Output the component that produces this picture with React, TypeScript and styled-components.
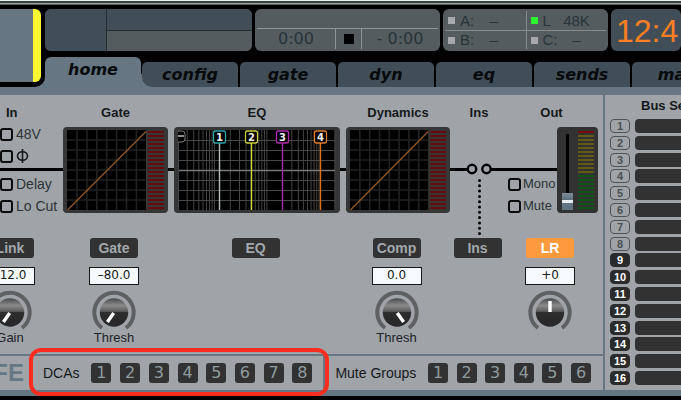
import React from "react";
import styled, { createGlobalStyle, css } from "styled-components";

const color = {
  slate: "#667783",
  slateDark: "#414e57",
  grey: "#555c5f",
  surface: "#a0a4a9",
  ink: "#27343a",
  dark: "#323232",
  orange: "#fd9a3d",
};

const GlobalStyle = createGlobalStyle`
  * { box-sizing: border-box; }
  html, body { margin: 0; background: #000; }
  body, button, input { font-family: "Liberation Sans", Arial, sans-serif; }
  button { padding: 0; border: 0; cursor: pointer; }
`;

const Page = styled.div`
  min-height: 100vh;
  overflow: hidden;
  background: #000;
  color: #15191b;
`;

const WindowEdge = styled.div`
  height: 5px;
  background: linear-gradient(#e8f3ec 0 1px, #35413e 1px 3px, #98a3a1 3px 4px, #59625f 4px 5px);
`;

/* ---------- header ---------- */

const Header = styled.header`
  display: flex;
  padding-bottom: 8px;
  background: ${color.slate};
`;

const ChannelSlot = styled.div`
  flex: none;
  width: 45px;
  padding: 4px 4px 5px 0;
  background: #000;
  border-bottom-right-radius: 10px;
`;

const ChannelStrip = styled.div`
  height: 73px;
  background: ${color.slate};
  border-right: 8px solid #fdf632;
  border-radius: 0 6px 6px 0;
`;

const HeaderMain = styled.div`
  flex: 1;
  min-width: 0;
  overflow: hidden;
`;

const Displays = styled.div`
  display: flex;
  gap: 3px;
  padding: 4px 0 6px;
  background: #000;
`;

const Display = styled.div<{ $width?: number; $bg?: string }>`
  flex: ${(p) => (p.$width ? `0 0 ${p.$width}px` : "1 0 auto")};
  height: 42px;
  border-radius: 6px;
  overflow: hidden;
  background: ${(p) => p.$bg ?? color.grey};
  color: ${color.ink};
`;

const NameGrid = styled(Display)`
  display: grid;
  grid-template-columns: 62px 1fr;
  grid-template-rows: 1fr 1fr;
`;

const NameCell = styled.div<{ $tall?: boolean; $grey?: boolean }>`
  grid-row: ${(p) => (p.$tall ? "span 2" : "auto")};
  background: ${(p) => (p.$grey ? color.grey : color.slateDark)};
  border-right: ${(p) => (p.$tall ? "1px solid #222b30" : "0")};
  border-top: ${(p) => (p.$grey ? "1px solid #222b30" : "0")};
`;

const Recorder = styled(Display)`
  display: flex;
  flex-direction: column;
  padding: 0 2px 2px;
`;

const RecorderTitle = styled.div`
  height: 22px;
  border-bottom: 1px solid #8f9596;
`;

const RecorderRow = styled.div`
  flex: 1;
  display: grid;
  grid-template-columns: 78px 27px 1fr;
  font: 16px/20px "DejaVu Sans", sans-serif;
  text-align: center;
`;

const StopCell = styled.div`
  display: flex;
  align-items: center;
  justify-content: center;
  border: solid #8f9596;
  border-width: 0 1px;
`;

const StopMark = styled.span`
  width: 10px;
  height: 10px;
  background: #000;
`;

const CardGrid = styled(Display)`
  display: grid;
  grid-template-columns: 1fr 1fr;
  grid-template-rows: 1fr 1fr;
  padding: 2px;
`;

const CardCell = styled.div<{ $right?: boolean; $bottom?: boolean }>`
  display: grid;
  grid-template-columns: 12px 20px 28px;
  align-items: center;
  padding-left: ${(p) => (p.$right ? 4 : 3)}px;
  border: solid #858b8c;
  border-width: ${(p) => (p.$bottom ? 1 : 0)}px 0 0 ${(p) => (p.$right ? 1 : 0)}px;
  font-size: 15px;
  line-height: 18px;
`;

const CardRate = styled.span`
  text-align: center;
`;

const Lamp = styled.span<{ $on?: boolean }>`
  width: 7px;
  height: 7px;
  background: ${(p) => (p.$on ? "#2bf52f" : "#a6a8ae")};
`;

const Clock = styled(Display)`
  padding-left: 5px;
  color: #fd7f24;
  font-size: 32px;
  line-height: 44px;
`;

const Tabs = styled.nav`
  display: flex;
  align-items: flex-end;
  gap: 2px;
  background: #000;
`;

const tabBase = css`
  flex: none;
  width: 96px;
  color: #070a0c;
  font: italic bold 16px/24px "DejaVu Sans", sans-serif;
`;

const Tab = styled.button`
  ${tabBase}
  height: 25px;
  border-radius: 5px 5px 0 0;
  background: ${color.slateDark};
`;

const ActiveTab = styled.button`
  ${tabBase}
  height: 30px;
  padding-bottom: 4px;
  border-radius: 6px 6px 0 0;
  background: ${color.slate};
`;

const NextTabSlot = styled.span`
  display: flex;
  margin-left: -2px;
  padding-left: 1px;
  background: linear-gradient(#000 12px, ${color.slate} 12px);
`;

const NextTab = styled(Tab)`
  border-bottom-left-radius: 10px;
`;

/* ---------- body ---------- */

const Body = styled.main`
  display: flex;
  background: ${color.surface};
  border-bottom: 6px solid ${color.slate};
`;

const HomePane = styled.div`
  flex: 1;
  min-width: 0;
  border-right: 2px solid ${color.slate};
`;

const Sections = styled.div`
  display: grid;
  grid-template-columns: 60fr 111fr 172fr 110fr 52fr 98fr;
  height: 259px;
  overflow: hidden;
`;

const Section = styled.section`
  display: flex;
  flex-direction: column;
  min-width: 0;
`;

const OutSection = styled(Section)`
  padding-right: 5px;
`;

const Heading = styled.h2<{ $start?: boolean }>`
  margin: 0;
  padding: ${(p) => (p.$start ? "10px 0 6px 6px" : "10px 0 6px")};
  font-size: 13px;
  line-height: 16px;
  text-align: ${(p) => (p.$start ? "left" : "center")};
`;

const wire = css`
  background: linear-gradient(transparent 41px, #000 41px 44px, transparent 44px);
`;

const Stage = styled.div`
  height: 86px;
  padding: 0 3px;
  ${wire}
`;

const InputStage = styled.div`
  display: flex;
  flex-direction: column;
  justify-content: space-between;
  height: 86px;
  ${wire}
`;

const OutputStage = styled.div`
  display: flex;
  justify-content: space-between;
  align-items: flex-end;
  height: 86px;
  padding-left: 3px;
  ${wire}
`;

const Checks = styled.div`
  display: flex;
  flex-direction: column;
  gap: 8px;
`;

const Check = styled.label<{ $compact?: boolean }>`
  display: flex;
  align-items: center;
  gap: ${(p) => (p.$compact ? 2 : 3)}px;
  height: 14px;
  color: #2c3336;
  font-size: ${(p) => (p.$compact ? 13 : 14)}px;
  line-height: 14px;
  white-space: nowrap;

  input {
    appearance: none;
    flex: none;
    width: 13px;
    height: 13px;
    margin: 0;
    border: 2px solid #0c0c0c;
    border-radius: 3px;
  }
  input:checked {
    background: ${color.orange};
  }
`;

const GraphSvg = styled.svg`
  display: block;
  width: 100%;
  height: 86px;
  overflow: visible;
`;

const Controls = styled.div<{ $start?: boolean }>`
  display: flex;
  flex-direction: column;
  align-items: center;
  width: ${(p) => (p.$start ? "50px" : "auto")};
  margin: ${(p) => (p.$start ? "25px 0 0 -15px" : "25px 3px 0 0")};
`;

const Toggle = styled.button<{ $on?: boolean }>`
  width: 48px;
  height: 20px;
  border-radius: 3px;
  background: ${(p) => (p.$on ? color.orange : color.dark)};
  color: ${(p) => (p.$on ? "#fff" : "#a3a8ac")};
  font-size: 14px;
  font-weight: bold;
  line-height: 20px;
`;

const Value = styled.input`
  width: 50px;
  height: 18px;
  margin: 9px 0 5px;
  padding: 0 0 2px;
  border: 1px solid #15191b;
  border-radius: 0;
  background: #f7fafc;
  color: #15191b;
  font-family: "DejaVu Sans", sans-serif;
  font-size: 12px;
  text-align: center;
`;

const KnobLabel = styled.label`
  position: relative;
  display: flex;
  flex-direction: column;
  align-items: center;
  color: #1d2326;
  font-size: 13px;
  line-height: 14px;

  input {
    position: absolute;
    inset: 0;
    width: 100%;
    margin: 0;
    opacity: 0;
  }
`;

const Strip = styled.div`
  display: flex;
  width: 41px;
  height: 86px;
  padding: 3px 4px 3px 5px;
  justify-content: space-between;
  align-items: flex-end;
  border-radius: 4px;
  background: ${color.dark};
`;

const Fader = styled.input`
  appearance: none;
  writing-mode: vertical-lr;
  direction: rtl;
  width: 11px;
  height: 76px;
  margin: 0;
  background: linear-gradient(90deg, transparent 4px, #000 4px 7px, transparent 7px);

  &::-webkit-slider-thumb {
    appearance: none;
    width: 11px;
    height: 17px;
    background: linear-gradient(#7d8b96, #5e7180 7px, #e6edf1 7px 10px, #627583 10px);
  }
`;

/* ---------- footer ---------- */

const Footer = styled.footer`
  display: flex;
  height: 36px;
  border-top: 2px solid ${color.slate};
`;

const SafeButton = styled.button`
  display: flex;
  justify-content: flex-end;
  flex: none;
  width: 33px;
  padding-right: 7px;
  overflow: hidden;
  border-right: 2px solid ${color.slate};
  background: none;
  color: ${color.slate};
  font-size: 24px;
  font-weight: bold;
  line-height: 34px;
`;

const Group = styled.div<{ $wide?: boolean }>`
  position: relative;
  flex: ${(p) => (p.$wide ? "292 1 0" : "277 1 0")};
  display: flex;
  align-items: center;
  justify-content: space-between;
  padding: 0 ${(p) => (p.$wide ? 11 : 12)}px 0 10px;
  border-right: ${(p) => (p.$wide ? `2px solid ${color.slate}` : "0")};
  font-size: 14px;
`;

const Highlight = styled.div`
  position: absolute;
  inset: -8px -6px -6px -4px;
  border: 4px solid #fb2d20;
  border-radius: 12px;
  pointer-events: none;
`;

const Keys = styled.div<{ $count: number }>`
  display: flex;
  justify-content: space-between;
  width: ${(p) => p.$count * 29 - 11}px;
`;

const Key = styled.button`
  width: 20px;
  height: 20px;
  border-radius: 3px;
  background: ${color.dark};
  color: #8f9c9f;
  font: 16px/20px "DejaVu Sans", sans-serif;
`;

/* ---------- bus sends ---------- */

const BusPane = styled.aside`
  flex: none;
  display: flex;
  flex-direction: column;
  width: 76px;
  padding: 3px 0 5px 5px;
  overflow: hidden;
`;

const BusTitle = styled.h2`
  margin: 0 0 5px;
  padding-left: 31px;
  font-size: 13px;
  line-height: 16px;
  white-space: nowrap;
`;

const BusList = styled.div`
  flex: 1;
  display: flex;
  flex-direction: column;
  justify-content: space-between;
`;

const BusRow = styled.div`
  display: flex;
  gap: 5px;
  height: 14px;
`;

const BusKey = styled.button<{ $on: boolean }>`
  width: 20px;
  height: 14px;
  border: 1px solid ${(p) => (p.$on ? "#2b2b2b" : "#4f5356")};
  border-radius: 4px;
  background: ${(p) => (p.$on ? "#2b2b2b" : "transparent")};
  color: ${(p) => (p.$on ? "#fff" : "#4b4f52")};
  font-size: 11px;
  font-weight: bold;
  line-height: 12px;
`;

const BusLevel = styled.div`
  flex: 1;
  border-radius: 4px 0 0 4px;
  background: ${color.dark};
`;

/* ---------- drawings ---------- */

const range = (n: number) => Array.from({ length: n }, (_, i) => i);

function CurveGraph({ label }: { label: string }) {
  return (
    <GraphSvg viewBox="0 0 105 86" preserveAspectRatio="none" role="img" aria-label={label}>
      <rect width="105" height="86" rx="4" fill="#363636" />
      <rect x="4" y="3" width="79" height="80" fill="#000" />
      {range(7).map((i) => (
        <g key={i} stroke="#212121" strokeWidth="1.6">
          <path d={`M${14 + i * 9.9} 3V83`} />
          <path d={`M4 ${13 + i * 10}H83`} />
        </g>
      ))}
      <path d="M4.500 83L83 4.500" stroke="#8c5526" strokeWidth="1.500" />
      {range(20).map((i) => (
        <rect key={i} x="85" y={4 + i * 4} width="16" height="2" fill="#640b0e" />
      ))}
    </GraphSvg>
  );
}

const eqLines = [10, 100, 1000, 10000]
  .flatMap((d) => range(9).map((i) => d * (i + 1)))
  .filter((f) => f > 20 && f <= 20000)
  .map((f) => 4 + 52.3 * Math.log10(f / 20));

const eqBands = [
  { n: 1, x: 45.5, stroke: "#2aa5a8", line: "#b9bdbd" },
  { n: 2, x: 77.5, stroke: "#c9cb35", line: "#d7d93d" },
  { n: 3, x: 108.5, stroke: "#b02bb0", line: "#a52aa6" },
  { n: 4, x: 146.5, stroke: "#e07a26", line: "#d9701f" },
];

function EqGraph() {
  return (
    <GraphSvg viewBox="0 0 166 86" preserveAspectRatio="none" role="img" aria-label="EQ curve">
      <rect width="166" height="86" rx="4" fill="#363636" />
      <rect x="4" y="3" width="157" height="80" fill="#000" />
      {eqLines.map((x) => (
        <path key={x} d={`M${x} 3V83`} stroke="#444" />
      ))}
      {range(7).map((i) => (
        <path key={i} d={`M4 ${13.5 + i * 10}H161`} stroke={i === 3 ? "#777" : "#484848"} strokeWidth={i === 3 ? 1.5 : 1} />
      ))}
      <path d="M4.500 3V83" stroke="#3a444a" />
      <path d="M4 4H8Q11 4 11 7V12Q11 15 8 15H4" fill="#000" stroke="#777d7d" />
      <path d="M4 9H10" stroke="#bbb" strokeWidth="1.500" />
      {eqBands.map((b) => (
        <g key={b.n}>
          <path d={`M${b.x} 16V83`} stroke={b.line} strokeWidth="1.400" />
          <rect x={b.x - 6} y="4" width="12" height="12" rx="2" fill="#000" stroke={b.stroke} strokeWidth="1.300" />
          <text x={b.x} y="14" fill="#eee" fontFamily="DejaVu Sans, sans-serif" fontWeight="bold" fontSize="10" textAnchor="middle">
            {b.n}
          </text>
        </g>
      ))}
    </GraphSvg>
  );
}

function InsertSwitch() {
  return (
    <GraphSvg viewBox="0 0 52 86" role="img" aria-label="Insert point">
      <g fill="none" stroke="#000" strokeWidth="3">
        <path d="M0 42.500H15M38 42.500H52" />
        <circle cx="19" cy="42" r="4.200" strokeWidth="2.400" />
        <circle cx="33.500" cy="42" r="4.200" strokeWidth="2.400" />
        <path d="M26.500 53.500V108" strokeLinecap="round" strokeDasharray="0 5.300" />
      </g>
    </GraphSvg>
  );
}

function LevelMeter() {
  return (
    <svg width="16" height="80" role="img" aria-label="Output level">
      {range(20).map((i) => (
        <rect key={i} y={i * 4 + 1} width="16" height="2" fill={i === 0 ? "#7a0a0c" : i < 11 ? "#615a14" : "#0e5416"} />
      ))}
    </svg>
  );
}

function Knob({ label, name, angle }: { label?: string; name: string; angle: number }) {
  const id = `face-${name}`;
  return (
    <KnobLabel>
      <svg width="46" height="41" aria-hidden="true">
        <defs>
          <linearGradient id={id} x1="0" y1="0" x2="0" y2="1">
            <stop offset="0" stopColor="#4a4a4a" />
            <stop offset="0.25" stopColor="#8a8a8a" />
            <stop offset="0.46" stopColor="#5c5c5c" />
            <stop offset="0.5" stopColor="#2e2e2e" />
            <stop offset="1" stopColor="#262626" />
          </linearGradient>
        </defs>
        <path d="M11 38A19.700 19.700 0 1 1 35 38" fill="none" stroke="#5f6061" strokeWidth="4" />
        <circle cx="23" cy="22.500" r="14.200" fill={`url(#${id})`} />
        <path d="M23 22V11" stroke="#fff" strokeWidth="3.400" transform={`rotate(${angle} 23 22.5)`} />
      </svg>
      {label}
      <input type="range" min={-150} max={150} defaultValue={angle} aria-label={label ?? name} />
    </KnobLabel>
  );
}

function Tick({ label, compact, children }: { label: string; compact?: boolean; children?: React.ReactNode }) {
  return (
    <Check $compact={compact}>
      <input type="checkbox" aria-label={label} />
      {children ?? label}
    </Check>
  );
}

function PhaseIcon() {
  return (
    <svg width="13" height="14" fill="none" stroke="#15191b" strokeWidth="1.600" aria-hidden="true">
      <ellipse cx="6.500" cy="7" rx="5" ry="4.300" />
      <path d="M6.500 0V14" />
    </svg>
  );
}

function KeyGroup({ label, count, wide, children }: { label: string; count: number; wide?: boolean; children?: React.ReactNode }) {
  return (
    <Group $wide={wide} role="group" aria-label={label}>
      <span>{label}</span>
      <Keys $count={count}>
        {range(count).map((i) => (
          <Key key={i} type="button">{i + 1}</Key>
        ))}
      </Keys>
      {children}
    </Group>
  );
}

export default function App() {
  return (
    <Page>
      <GlobalStyle />
      <WindowEdge />
      <Header>
        <ChannelSlot>
          <ChannelStrip />
        </ChannelSlot>
        <HeaderMain>
          <Displays>
            <NameGrid $width={207}>
              <NameCell $tall />
              <NameCell />
              <NameCell $grey />
            </NameGrid>
            <Recorder $width={185}>
              <RecorderTitle />
              <RecorderRow>
                <span>0:00</span>
                <StopCell>
                  <StopMark />
                </StopCell>
                <span>- 0:00</span>
              </RecorderRow>
            </Recorder>
            <CardGrid $width={165}>
              <CardCell><Lamp /><span>A:</span><CardRate>–</CardRate></CardCell>
              <CardCell $right><Lamp $on /><span>L</span><CardRate>48K</CardRate></CardCell>
              <CardCell $bottom><Lamp /><span>B:</span><CardRate>–</CardRate></CardCell>
              <CardCell $right $bottom><Lamp /><span>C:</span><CardRate>–</CardRate></CardCell>
            </CardGrid>
            <Clock $bg={color.slateDark}>12:4</Clock>
          </Displays>
          <Tabs>
            <ActiveTab type="button" aria-current="page">home</ActiveTab>
            <NextTabSlot>
              <NextTab type="button">config</NextTab>
            </NextTabSlot>
            {["gate", "dyn", "eq", "sends", "main"].map((t) => (
              <Tab key={t} type="button">{t}</Tab>
            ))}
          </Tabs>
        </HeaderMain>
      </Header>

      <Body>
        <HomePane>
          <Sections>
            <Section>
              <Heading $start>In</Heading>
              <InputStage>
                <Checks>
                  <Tick label="48V" />
                  <Tick label="Phase"><PhaseIcon /></Tick>
                </Checks>
                <Checks>
                  <Tick label="Delay" />
                  <Tick label="Lo Cut" />
                </Checks>
              </InputStage>
              <Controls $start>
                <Toggle type="button">Link</Toggle>
                <Value aria-label="Gain" defaultValue="–12.0" />
                <Knob name="gain" label="Gain" angle={-145} />
              </Controls>
            </Section>

            <Section>
              <Heading>Gate</Heading>
              <Stage><CurveGraph label="Gate curve" /></Stage>
              <Controls>
                <Toggle type="button">Gate</Toggle>
                <Value aria-label="Gate threshold" defaultValue="–80.0" />
                <Knob name="gate" label="Thresh" angle={-145} />
              </Controls>
            </Section>

            <Section>
              <Heading>EQ</Heading>
              <Stage><EqGraph /></Stage>
              <Controls>
                <Toggle type="button">EQ</Toggle>
              </Controls>
            </Section>

            <Section>
              <Heading>Dynamics</Heading>
              <Stage><CurveGraph label="Dynamics curve" /></Stage>
              <Controls>
                <Toggle type="button">Comp</Toggle>
                <Value aria-label="Compressor threshold" defaultValue="0.0" />
                <Knob name="comp" label="Thresh" angle={145} />
              </Controls>
            </Section>

            <Section>
              <Heading>Ins</Heading>
              <InsertSwitch />
              <Controls>
                <Toggle type="button">Ins</Toggle>
              </Controls>
            </Section>

            <OutSection>
              <Heading>Out</Heading>
              <OutputStage>
                <Checks>
                  <Tick compact label="Mono" />
                  <Tick compact label="Mute" />
                </Checks>
                <Strip>
                  <Fader type="range" min={0} max={100} defaultValue={0} aria-label="Output fader" />
                  <LevelMeter />
                </Strip>
              </OutputStage>
              <Controls>
                <Toggle type="button" $on>LR</Toggle>
                <Value aria-label="Pan" defaultValue="+0" />
                <Knob name="pan" angle={0} />
              </Controls>
            </OutSection>
          </Sections>

          <Footer>
            <SafeButton type="button">SAFE</SafeButton>
            <KeyGroup label="DCAs" count={8} wide>
              <Highlight />
            </KeyGroup>
            <KeyGroup label="Mute Groups" count={6} />
          </Footer>
        </HomePane>

        <BusPane>
          <BusTitle>Bus Sends</BusTitle>
          <BusList>
            {range(16).map((i) => (
              <BusRow key={i}>
                <BusKey type="button" $on={i >= 8}>{i + 1}</BusKey>
                <BusLevel />
              </BusRow>
            ))}
          </BusList>
        </BusPane>
      </Body>
    </Page>
  );
}
